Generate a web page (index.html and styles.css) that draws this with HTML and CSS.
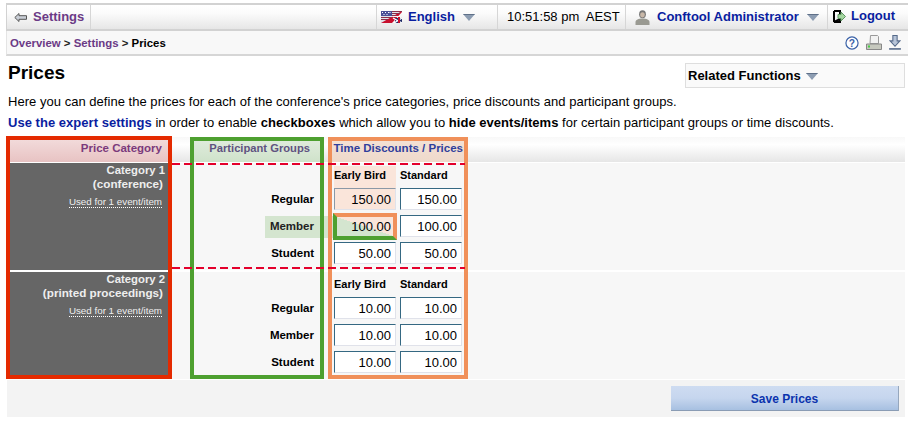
FILE: index.html
```html
<!DOCTYPE html>
<html lang="en">
<head>
<meta charset="utf-8">
<title>Prices</title>
<link rel="stylesheet" href="styles.css">
</head>
<body>
<div class="page">
  <nav class="topbar">
    <a class="cell cell-back"><svg class="ico-back" viewBox="0 0 13 9" width="13" height="9"><path d="M5 .5 .8 4.5 5 8.500V6.300h7.500V2.700H5z" fill="#c9ced6" stroke="#555" stroke-width="1"/></svg><span>Settings</span></a>
    <div class="bar-spacer"></div>
    <a class="cell cell-lang">
      <svg class="ico-flag" viewBox="0 0 21 12" width="21" height="12">
        <rect width="21" height="12" fill="#c8102e"/>
        <path d="M0 0h21L0 12z" fill="#dfe3ea"/>
        <path d="M0 0h21v1H0zM0 2h19v1H0zM0 4h15v1H0zM0 6h11v1H0zM0 8h7v1H0z" fill="#8c2f4a"/>
        <path d="M0 0h11v5H0z" fill="#4a4f96"/>
        <path d="M1 1h1v1H1zM4 1h1v1H4zM7 1h1v1H7zM2.500 3h1v1h-1zM5.500 3h1v1h-1zM8.500 1h1v1h-1z" fill="#fff"/>
        <path d="M21 1 11 12h5l5-5.500zM9 6h12V5H12z" fill="#f6f6f6"/>
        <path d="M14 7h7v5h-7z" fill="#1f2a66"/>
        <path d="M12 7 21 12M21 7l-8 5" stroke="#fff" stroke-width="1.400"/>
        <path d="M17 6h2v6h-2z" fill="#c8102e"/>
      </svg>
      <span class="lang-name">English</span>
      <svg class="ico-caret" viewBox="0 0 12 7" width="12" height="7"><path d="M0 0h12L6 7z" fill="#8d9db2"/><path d="M0 0h12L11 1H1z" fill="#5f7088"/></svg>
    </a>
    <div class="cell cell-time">10:51:58 pm&nbsp; AEST</div>
    <a class="cell cell-user">
      <svg class="ico-user" viewBox="0 0 15 15" width="15" height="15"><ellipse cx="7.500" cy="4.300" rx="3.400" ry="4" fill="#777"/><ellipse cx="7.500" cy="4.800" rx="2.300" ry="2.600" fill="#c9b8a8"/><path d="M.5 15v-3c0-2 3-3.500 7-3.500s7 1.500 7 3.500v3z" fill="#9a9a92"/></svg>
      <span class="lang-name">Conftool Administrator</span>
      <svg class="ico-caret" viewBox="0 0 12 7" width="12" height="7"><path d="M0 0h12L6 7z" fill="#8d9db2"/><path d="M0 0h12L11 1H1z" fill="#5f7088"/></svg>
    </a>
    <a class="cell cell-logout">
      <svg class="ico-logout" viewBox="0 0 13 13" width="13" height="13"><path d="M1 1h6v3M7 9v3H1z" fill="none" stroke="#000" stroke-width="2"/><path d="M1 1v11" stroke="#000" stroke-width="2"/><path d="M5 4.500h3V2l4.500 4.500L8 11V8.500H5z" fill="#a5d6a0" stroke="#5c9460"/></svg>
      <span class="lang-name">Logout</span>
    </a>
  </nav>
  <div class="crumbs">
    <div class="crumb-path"><a>Overview</a> &gt; <a>Settings</a> &gt; <span class="crumb-here">Prices</span></div>
    <div class="crumb-tools">
      <svg viewBox="0 0 15 15" width="14" height="14"><circle cx="7.500" cy="7.500" r="6.500" fill="#fff" stroke="#3c63a8" stroke-width="1.300"/><text x="7.500" y="11.300" class="help-mark">?</text></svg>
      <svg viewBox="0 0 16 15" width="16" height="15"><path d="M4.500 .5h7l1 1v7h-8.500z" fill="#f2f2f2" stroke="#999"/><path d="M.5 9h15v5.500H.5z" fill="#c6c8be" stroke="#888"/><rect x="2" y="10.500" width="2" height="2" fill="#46d046"/></svg>
      <svg viewBox="0 0 11 14" width="12" height="15"><path d="M3.500.5h4v5H10L5.500 10.500 1 5.500h2.500z" fill="#b7c4d8" stroke="#566a8a"/><path d="M0 13h11" stroke="#566a8a" stroke-width="1.500"/></svg>
    </div>
  </div>

  <div class="title-row">
    <h1>Prices</h1>
    <div class="related">Related Functions <svg class="ico-caret" viewBox="0 0 12 7" width="12" height="7"><path d="M0 0h12L6 7z" fill="#8d9db2"/><path d="M0 0h12L11 1H1z" fill="#5f7088"/></svg></div>
  </div>
  <p class="intro">Here you can define the prices for each of the conference's price categories, price discounts and participant groups.</p>
  <p class="intro"><a class="expert">Use the expert settings</a> in order to enable <b>checkboxes</b> which allow you to <b>hide events/items</b> for certain participant groups or time discounts.</p>

  <div class="matrix">
    <div class="head-row">
      <div class="head head-cat">Price Category</div>
      <div class="head head-group">Participant Groups</div>
      <div class="head head-time">Time Discounts / Prices</div>
    </div>

    <div class="cat-row">
      <div class="cat">
        <div class="cat-name">Category 1</div>
        <div class="cat-sub">(conference)</div>
        <div class="cat-used"><span>Used for 1 event/item</span></div>
      </div>
      <div class="prices">
        <div class="lab"></div><div class="col-head col-hot">Early Bird</div><div class="col-head">Standard</div>
        <div class="lab">Regular</div><div class="slot col-hot"><input class="amount amount-hot" value="150.00"></div><div class="slot"><input class="amount" value="150.00"></div>
        <div class="lab"><span class="lab-hot">Member</span></div><div class="slot"><input class="amount amount-focus" value="100.00"></div><div class="slot"><input class="amount" value="100.00"></div>
        <div class="lab">Student</div><div class="slot"><input class="amount" value="50.00"></div><div class="slot"><input class="amount" value="50.00"></div>
      </div>
    </div>

    <div class="cat-row cat-row-2">
      <div class="cat">
        <div class="cat-name">Category 2</div>
        <div class="cat-sub">(printed proceedings)</div>
        <div class="cat-used"><span>Used for 1 event/item</span></div>
      </div>
      <div class="prices">
        <div class="lab"></div><div class="col-head">Early Bird</div><div class="col-head">Standard</div>
        <div class="lab">Regular</div><div class="slot"><input class="amount" value="10.00"></div><div class="slot"><input class="amount" value="10.00"></div>
        <div class="lab">Member</div><div class="slot"><input class="amount" value="10.00"></div><div class="slot"><input class="amount" value="10.00"></div>
        <div class="lab">Student</div><div class="slot"><input class="amount" value="10.00"></div><div class="slot"><input class="amount" value="10.00"></div>
      </div>
    </div>

    <div class="foot"><button class="save">Save Prices</button></div>

    <div class="mark mark-red"></div>
    <div class="mark mark-green"></div>
    <div class="mark mark-orange"></div>
    <div class="dash dash-1"></div>
    <div class="dash dash-2"></div>
  </div>
</div>
</body>
</html>
```
FILE: styles.css
```css
* { box-sizing: border-box; }
html, body { margin: 0; background: #fff; }
body { font: 13px/14px "Liberation Sans", Arial, sans-serif; color: #000; }
.page { padding: 3px 3px 0 6px; height: 424px; overflow: hidden; }
a { text-decoration: none; }

.topbar {
  display: flex; height: 28px;
  border-top: 2px solid #d2d2d2; border-bottom: 2px solid #d2d2d2; border-left: 1px solid #d2d2d2;
  background: linear-gradient(#fff, #fbfbfb 35%, #e6e6e6);
}
.cell { display: flex; align-items: center; border-right: 1px solid #d6d6d6; font-weight: bold; }
.cell-back { width: 84px; padding-left: 7px; color: #6b3a86; }
.ico-back { margin-right: 6px; }
.bar-spacer { width: 286px; border-right: 1px solid #d6d6d6; }
.cell-lang { width: 121px; padding-left: 4px; }
.ico-flag { margin-right: 6px; }
.lang-name { color: #0a1ea0; }
.ico-caret { margin-left: 8px; }
.cell-time { width: 128px; padding-left: 9px; font-weight: normal; }
.cell-user { width: 202px; padding-left: 9px; }
.ico-user { margin-right: 7px; }
.cell-logout { border-right: 0; padding: 0 0 2px 5px; }
.ico-logout { margin-right: 5px; }

.crumbs {
  display: flex; justify-content: space-between; align-items: center;
  height: 25px; padding: 0 7px 0 3px;
  background: #f8f8f8; border-bottom: 2px solid #d6d6d6; border-left: 1px solid #e4e4e4;
  font-size: 11.400px; font-weight: bold; color: #222;
}
.crumb-path a { color: #6b3a86; }
.crumb-here { color: #000; }
.crumb-tools { display: flex; align-items: center; gap: 7px; }
.help-mark { font: bold 11px "Liberation Sans", sans-serif; fill: #3c63a8; text-anchor: middle; }

.title-row { display: flex; justify-content: space-between; margin-top: 7px; padding-left: 2px; }
h1 { margin: -1px 0 0; font-size: 19px; line-height: 22px; }
.related {
  width: 220px; height: 25px; margin-right: 3px; padding: 5px 0 0 2px;
  border: 1px solid #dedede; background: #fafafa;
  font-weight: bold;
}
.related .ico-caret { margin-left: 2px; }
.intro { margin: 7px 0 0 2px; letter-spacing: .03px; }
.expert { color: #0a1ea0; font-weight: bold; }

.matrix { position: relative; margin: 7px 0 0 1px; width: 898px; font-size: 11px; }
.head-row {
  display: grid; grid-template-columns: 158px 126px 132px; column-gap: 26px;
  height: 25px; padding-left: 3px; background: linear-gradient(#f8f8f8, #fff 30%, #e6e6e6);
  font-weight: bold; font-size: 11.500px;
}
.head { padding: 4px 6px 0 0; text-align: right; white-space: nowrap; }
.head-cat { color: #7b3a7c; background: linear-gradient(#f3dddd, #e8c3c3); }
.head-group { color: #5f5380; font-size: 11.200px; background: linear-gradient(#e2eddf, #cfe2ca); padding-right: 10px; }
.head-time { color: #2f3f9c; background: linear-gradient(#f4e2d6, #efd9cb); margin-left: -14px; width: 132px; padding-right: 1px; }

.cat-row { display: flex; background: #f7f7f7; border-top: 1px solid #fff; height: 108px; padding-left: 3px; }
.cat-row-2 { border-top: 2px solid #fff; height: 109px; }
.cat { width: 158px; flex: none; background: #666; color: #eee; text-align: right; font-weight: bold; font-size: 11.700px; }
.cat-name { padding: 0 3px 0 0; line-height: 14px; font-size: 11.300px; }
.cat-sub { padding-right: 5px; line-height: 14px; }
.cat-used { padding-right: 6px; margin-top: 4px; font-size: 9.800px; font-weight: normal; line-height: 13px; }
.cat-used span { border-bottom: 1px dotted #fff; }

.prices {
  display: grid; grid-template-columns: 162px 62px 62px; grid-template-rows: 17px repeat(3, 22px);
  row-gap: 5px; column-gap: 4px; padding-top: 3px; font-weight: bold;
}
.lab { text-align: right; padding: 4px 20px 0 0; margin-right: -4px; font-size: 11.500px; }
.lab-hot { display: block; width: 69px; margin-left: auto; margin-right: -20px; margin-top: -3px; padding: 3px 20px 4px 0; background: #d4e5cf; text-align: right; height: 22px; color: #222; }
.col-head { padding-top: 1px; line-height: 17px; white-space: nowrap; }
.col-hot { background: #fae5da; }
.prices .col-head.col-hot { margin-bottom: -5px; height: 22px; }
.slot { display: block; }
.amount {
  display: block; width: 62px; height: 22px; padding: 0 4px 0 2px;
  border: 1px solid #e0e2ea; border-top: 1px solid #356882; border-left: 1px solid #356882;
  background: #fff; color: #000; text-align: right;
  font: 13px "Liberation Sans", Arial, sans-serif; outline: 0; border-radius: 0;
}
.amount-hot { background: #fae5da; border-color: #8a98a6 #e0e2ea #e0e2ea #8a98a6; }
.amount-focus {
  width: 64px; height: 27px; margin: -2px -1px 0 -1px; padding-right: 2px;
  border-width: 4px; border-style: solid; border-color: #f0905a #f0905a #4ea030 #4ea030;
  background: linear-gradient(to top right, #d4e5cf 50%, #fae5da 50%);
}

.foot { display: flex; justify-content: flex-end; height: 37px; margin-top: 1px; padding: 6px 6px 0 0; background: #f3f3f3; }
.save {
  width: 228px; height: 25px; padding: 1px 0 0; font: bold 12px "Liberation Sans", Arial, sans-serif; color: #0b33ad;
  background: linear-gradient(#cedcf1, #c6d6ee 50%, #a7c0e1);
  border: 0; border-bottom: 1px solid #8a9cb4; border-right: 1px solid #96a7bd;
}

.mark { position: absolute; top: 0; height: 242px; border: 4px solid; }
.mark-red { top: -1px; height: 243px; left: -1px; width: 166px; border-color: #e42a00; }
.mark-green { left: 183px; width: 134px; border-color: #4ea030; }
.mark-orange { left: 321px; width: 140px; border-color: #f0905a; }
.dash { position: absolute; left: 165px; width: 293px; height: 2px; background: repeating-linear-gradient(90deg, #e4002b 0 8px, transparent 8px 12px); }
.dash-1 { top: 26px; }
.dash-2 { top: 130px; }
```
